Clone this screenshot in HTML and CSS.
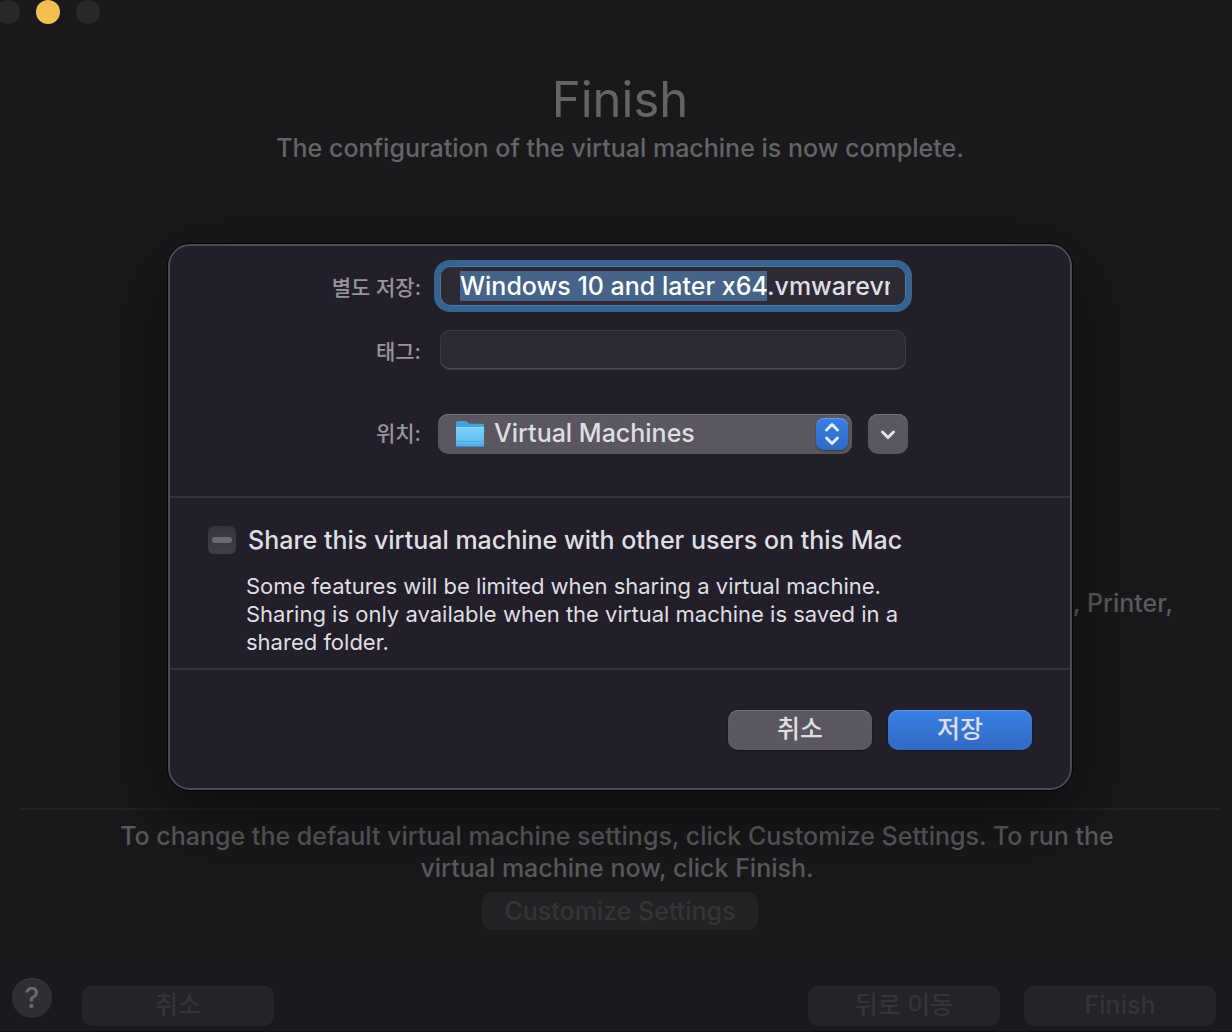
FILE: index.html
```html
<!DOCTYPE html>
<html lang="ko">
<head>
<meta charset="utf-8">
<meta name="viewport" content="width=device-width, initial-scale=1">
<title>Finish</title>
<link rel="stylesheet" href="styles.css">
</head>
<body>
<div class="window">
  <header class="titlebar">
    <button class="light" type="button" aria-label="Close"></button>
    <button class="light light-active" type="button" aria-label="Minimize"></button>
    <button class="light" type="button" aria-label="Zoom"></button>
  </header>

  <main class="assistant">
    <h1 class="title">Finish</h1>
    <p class="subtitle">The configuration of the virtual machine is now complete.</p>
    <p class="summary">, Printer,</p>
    <hr class="rule">
    <p class="hint">To change the default virtual machine settings, click Customize Settings. To run the virtual machine now, click Finish.</p>
    <button class="customize" type="button" disabled>Customize Settings</button>
  </main>

  <footer class="bar">
    <button class="help" type="button" aria-label="Help">?</button>
    <button class="bar-button" type="button" disabled>취소</button>
    <button class="bar-button bar-back" type="button" disabled>뒤로 이동</button>
    <button class="bar-button" type="button" disabled>Finish</button>
  </footer>

  <div class="overlay">
    <form class="sheet" role="dialog" aria-label="별도 저장">
      <div class="fields">
        <label class="label" for="name">별도 저장:</label>
        <input class="field field-focus" id="name" type="text" value="Windows 10 and later x64.vmwarevm" spellcheck="false" autocomplete="off">
        <label class="label" for="tags">태그:</label>
        <input class="field" id="tags" type="text">
        <label class="label label-place" for="place">위치:</label>
        <div class="place">
          <div class="popup">
            <svg class="folder" width="30" height="28" viewBox="0 0 30 28" aria-hidden="true">
              <defs>
                <linearGradient id="front" x1="0" y1="0" x2="0" y2="1">
                  <stop offset="0" stop-color="#7fd3fb"/>
                  <stop offset="1" stop-color="#55b2ea"/>
                </linearGradient>
              </defs>
              <path d="M1 3a2 2 0 0 1 2-2h7c1 0 1.500.4 2.200 1l1 1c.6.500 1 .8 2 .8h12a2 2 0 0 1 2 2V12H1z" fill="#47a1da"/>
              <path d="M1 7h28v18a2 2 0 0 1-2 2H3a2 2 0 0 1-2-2z" fill="url(#front)"/>
              <path d="M1 7.500h28" stroke="#96dcfb"/>
              <path d="M1 21.500h28M1 24.500h28" stroke="#429ed8" opacity=".5"/>
              <path d="M2 26.500h26" stroke="#328bc6"/>
            </svg>
            <select class="select" id="place"><option>Virtual Machines</option></select>
            <span class="stepper">
              <svg width="32" height="32" viewBox="0 0 32 32" fill="none" stroke="#e4eefb" stroke-width="3" stroke-linecap="round" stroke-linejoin="round" aria-hidden="true">
                <path d="M10.500 12L16 6.500l5.500 5.500M10.500 20L16 25.500l5.500-5.500"/>
              </svg>
            </span>
          </div>
          <button class="expand" type="button" aria-label="Expand">
            <svg width="40" height="40" viewBox="0 0 40 40" fill="none" stroke="#e6e4e7" stroke-width="3" stroke-linecap="round" stroke-linejoin="round" aria-hidden="true">
              <path d="M14.500 18l5.500 5.500 5.500-5.500"/>
            </svg>
          </button>
        </div>
      </div>

      <div class="share">
        <input class="check" id="share" type="checkbox" disabled>
        <label class="share-label" for="share">Share this virtual machine with other users on this Mac</label>
        <p class="share-note">Some features will be limited when sharing a virtual machine. Sharing is only available when the virtual machine is saved in a shared folder.</p>
      </div>

      <div class="actions">
        <button class="action" type="button">취소</button>
        <button class="action action-primary" type="submit">저장</button>
      </div>
    </form>
  </div>
</div>
<script src="script.js"></script>
</body>
</html>
```
FILE: styles.css
```css
* {
  box-sizing: border-box;
}

body {
  margin: 0;
  background: #19191b;
  color: #5c5c5e;
  font: 500 25px/32px Inter, "Noto Sans CJK KR", sans-serif;
}

button,
input,
select {
  margin: 0;
  padding: 0;
  border: 0;
  font: inherit;
  color: inherit;
}

h1,
p {
  margin: 0;
}

.window {
  position: relative;
  display: flex;
  flex-direction: column;
  min-height: 100vh;
  overflow: hidden;
}

.titlebar {
  display: flex;
  gap: 16px;
  height: 28px;
  margin-left: -4px;
}

.light {
  width: 24px;
  height: 24px;
  border-radius: 50%;
  background: #29292a;
}

.light-active {
  background: #f5bf4f;
}

.assistant {
  flex: 1;
  display: flex;
  flex-direction: column;
  align-items: center;
  padding: 40px 12px 33px 20px;
}

.title {
  font-size: 49px;
  line-height: 64px;
  font-weight: 400;
  color: #646466;
}

.subtitle {
  color: #646466;
}

.summary {
  flex: 1;
  align-self: flex-end;
  padding: 423px 47px 0 0;
}

.rule {
  align-self: stretch;
  height: 2px;
  margin: 0 0 10px;
  border: 0;
  background: #212123;
}

.hint {
  max-width: 1040px;
  margin-right: 6px;
  text-align: center;
}

.customize {
  width: 276px;
  height: 38px;
  margin-top: 8px;
  border-radius: 10px;
  background: #232325;
  color: #353537;
}

.bar {
  display: flex;
  align-items: flex-start;
  gap: 24px;
  height: 69px;
  padding: 15px 16px 0 12px;
  background: #19181d;
  border-bottom: 1px solid #0e0e11;
}

.help {
  width: 40px;
  height: 40px;
  margin-right: 6px;
  border-radius: 50%;
  background: #2f2e33;
  box-shadow: inset 0 1px #39383d;
  color: #6b6a6e;
  font-size: 28px;
}

.bar-button {
  width: 192px;
  height: 40px;
  margin-top: 8px;
  padding-bottom: 2px;
  border-radius: 10px;
  background: #242328;
  box-shadow: inset 0 1px #2a292e;
  color: #353439;
}

.bar-back {
  margin-left: auto;
}

.overlay {
  position: absolute;
  inset: 244px 0 auto 8px;
  display: flex;
  justify-content: center;
}

.sheet {
  width: 904px;
  border: 2px solid #4b4952;
  border-radius: 22px;
  background: #231f2a;
  color: #dfdee0;
  box-shadow: 0 0 0 1px #050506, 0 24px 80px rgba(0, 0, 0, .5);
}

.fields {
  display: grid;
  grid-template-columns: 1fr 470px;
  gap: 24px 17px;
  align-items: center;
  padding: 20px 162px 42px 0;
}

.label {
  padding-top: 4px;
  text-align: right;
  font-size: 21px;
  color: #97959b;
}

.field {
  height: 40px;
  margin: 0 2px;
  padding: 0 16px 0 20px;
  border-radius: 10px;
  background: #2e2a35;
  box-shadow: inset 0 0 0 1px #3b3842, inset 0 -2px #4a4751;
  outline: 0;
}

.field-focus {
  box-shadow: inset 0 0 0 1px #4479ab, 0 0 0 6px #37638f;
}

.field::selection {
  background: #466488;
  color: #fff;
}

.label-place,
.place {
  margin-top: 20px;
  padding-top: 0;
}

.place {
  display: flex;
  justify-content: space-between;
}

.popup {
  position: relative;
  width: 414px;
}

.select {
  display: block;
  width: 100%;
  height: 40px;
  padding: 0 48px 2px 56px;
  appearance: none;
  border-radius: 10px;
  background: #5a5760;
  box-shadow: inset 0 1px #757279;
}

.folder {
  position: absolute;
  top: 6px;
  left: 17px;
}

.stepper {
  position: absolute;
  top: 4px;
  right: 4px;
  width: 32px;
  height: 32px;
  border-radius: 8px;
  background: linear-gradient(#3a7fe4, #306ac4);
  box-shadow: inset 0 1px #5c98ec, 0 1px 2px rgba(0, 0, 0, .4);
  pointer-events: none;
}

.stepper svg,
.expand svg {
  display: block;
}

.expand {
  width: 40px;
  height: 40px;
  border-radius: 10px;
  background: #5a5760;
  box-shadow: inset 0 1px #757279;
}

.share {
  display: grid;
  grid-template-columns: 28px 1fr;
  gap: 16px 12px;
  align-items: center;
  padding: 26px 110px 12px 38px;
  border-top: 2px solid #37343d;
}

.check {
  display: grid;
  place-items: center;
  width: 28px;
  height: 28px;
  appearance: none;
  border-radius: 6px;
  background: linear-gradient(#36333d, #413e48);
}

.check::before {
  content: "";
  width: 20px;
  height: 6px;
  border-radius: 3px;
  background: #6b6971;
}

.share-note {
  grid-column: 2;
  margin-left: -2px;
  font-size: 22px;
  line-height: 28px;
  font-weight: 400;
}

.actions {
  display: flex;
  justify-content: flex-end;
  gap: 16px;
  padding: 40px 38px 38px;
  border-top: 2px solid #37343d;
}

.action {
  width: 144px;
  height: 40px;
  padding-bottom: 2px;
  border-radius: 10px;
  background: #5a5760;
  box-shadow: inset 0 1px #757279, 0 1px 2px rgba(0, 0, 0, .4);
}

.action-primary {
  background: linear-gradient(#3a7fe4, #306ac4);
  box-shadow: inset 0 1px #5c98ec, 0 1px 2px rgba(0, 0, 0, .4);
}
```
FILE: script.js
```js
const nameField = document.getElementById("name");
nameField.focus();
nameField.setSelectionRange(0, nameField.value.lastIndexOf("."));
document.getElementById("share").indeterminate = true;
```
